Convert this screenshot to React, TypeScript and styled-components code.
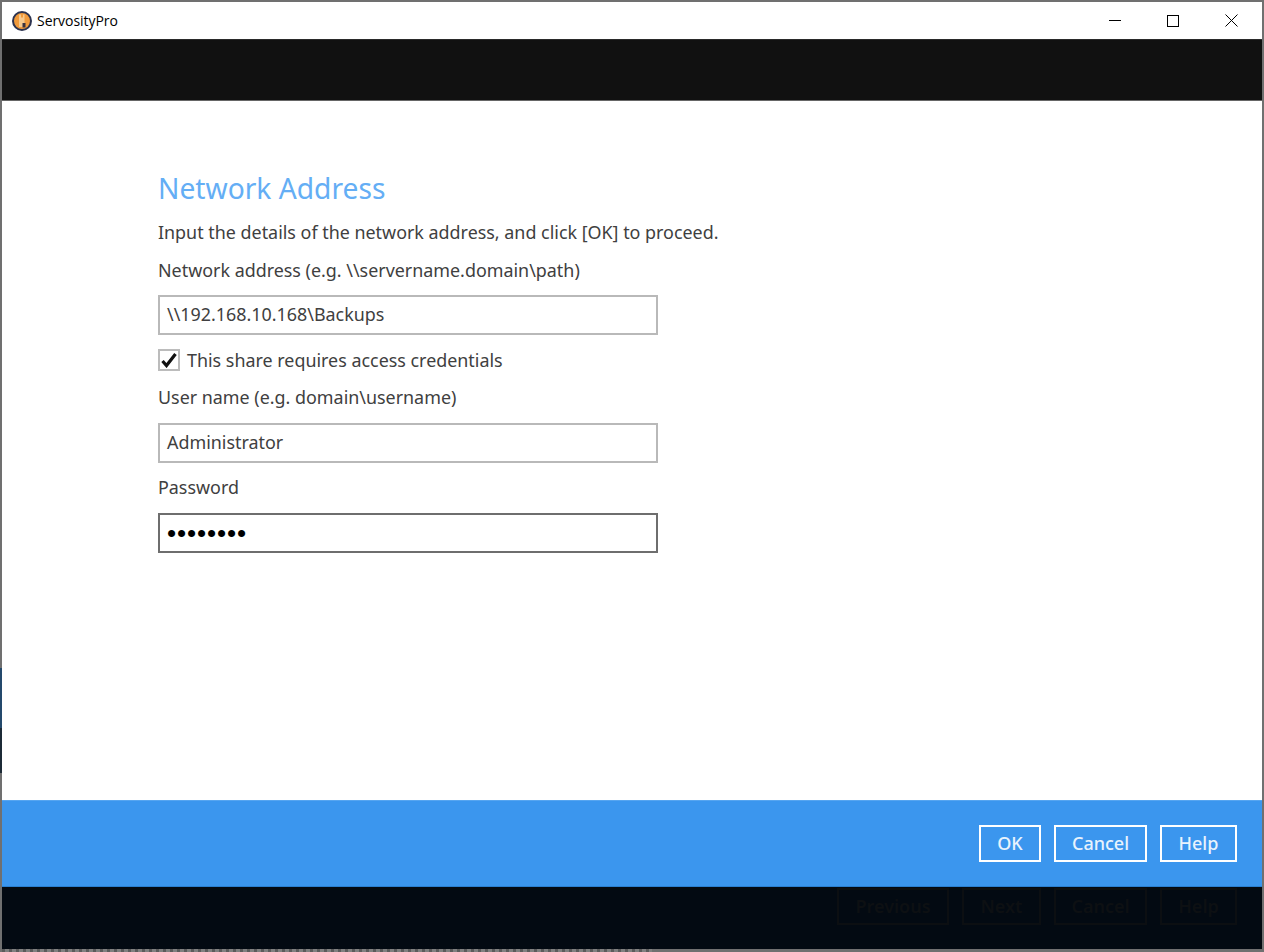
import React from "react";
import styled, { createGlobalStyle } from "styled-components";

const GlobalStyle = createGlobalStyle`
  html, body {
    margin: 0;
    padding: 0;
    height: 100%;
    overflow: hidden;
  }
  body {
    font-family: "Noto Sans", "Open Sans", "Liberation Sans", sans-serif;
  }
`;

const Desktop = styled.div`
  width: 1264px;
  height: 952px;
  box-sizing: border-box;
  padding: 2px 2px 0 2px;
  background-color: #707070;
  background-image: linear-gradient(
    to bottom,
    #707070 0,
    #707070 668px,
    #24496c 668px,
    #24496c 728px,
    #1c2a36 728px,
    #1c2a36 773px,
    #707070 773px
  );
  background-size: 2px 100%;
  background-repeat: no-repeat;
`;

const Window = styled.div`
  height: 947px;
  display: flex;
  flex-direction: column;
  background: #fff;
`;

const BleedStrip = styled.div`
  width: 650px;
  height: 3px;
  background: repeating-linear-gradient(to right, #5c5c5c 0, #5c5c5c 3px, #808080 3px, #808080 7px);
`;

const TitleBar = styled.div`
  height: 37px;
  flex: none;
  display: flex;
  align-items: center;
  padding-left: 10px;
  background: #fff;
`;

const AppName = styled.span`
  margin-left: 5px;
  font-family: "Open Sans", "Noto Sans", sans-serif;
  font-size: 14px;
  color: #000;
  letter-spacing: -0.05px;
`;

const WindowControls = styled.div`
  margin-left: auto;
  display: flex;
  height: 100%;
  padding-right: 1px;
`;

const ControlButton = styled.div`
  width: 58.5px;
  display: flex;
  align-items: center;
  justify-content: center;
`;

const HeaderBar = styled.div`
  height: 62px;
  flex: none;
  box-sizing: border-box;
  background: #111111;
  border-top: 1px solid #2a2a2a;
  border-bottom: 1px solid #666;
`;

const Content = styled.div`
  height: 699px;
  flex: none;
  box-sizing: border-box;
  padding: 68px 0 0 156px;
  background: #fff;
`;

const Heading = styled.h1`
  margin: 0 0 13px;
  font-size: 28.2px;
  line-height: 38px;
  font-weight: 400;
  color: #64aef5;
`;

const Text = styled.div<{ $gap?: number }>`
  font-size: 17.9px;
  line-height: 24px;
  color: #404040;
  margin-bottom: ${(props) => props.$gap ?? 0}px;
`;

const Field = styled.div<{ $focused?: boolean; $gap?: number }>`
  width: 500px;
  height: 40px;
  box-sizing: border-box;
  display: flex;
  align-items: center;
  padding: 0 0 2px 7px;
  border: 2px solid ${(props) => (props.$focused ? "#6e6e6e" : "#b9b9b9")};
  font-size: 17.9px;
  color: #404040;
  margin-bottom: ${(props) => props.$gap ?? 0}px;
`;

const PasswordDots = styled.span`
  color: #000;
  font-family: "Liberation Sans", sans-serif;
  font-size: 26px;
  line-height: 26px;
  letter-spacing: 0.9px;
  margin-top: 2px;
`;

const CheckRow = styled.div`
  display: flex;
  align-items: center;
  gap: 7px;
  height: 24px;
  margin: 13px 0 13px;
`;

const CheckBox = styled.div`
  width: 22px;
  height: 22px;
  box-sizing: border-box;
  border: 2px solid #bcbcbc;
  display: flex;
  align-items: center;
  justify-content: center;
`;

const ActionBar = styled.div`
  height: 87px;
  flex: none;
  box-sizing: border-box;
  display: flex;
  justify-content: flex-end;
  align-items: center;
  gap: 13px;
  padding-right: 25px;
  background: #3b96ee;
  border-top: 1px solid #56a5f0;
  border-bottom: 1px solid #2a7fd0;
`;

const ActionButton = styled.div<{ $width: number }>`
  width: ${(props) => props.$width}px;
  height: 37px;
  box-sizing: border-box;
  display: flex;
  align-items: center;
  justify-content: center;
  padding-bottom: 1px;
  border: 2px solid #fff;
  font-size: 18px;
  font-weight: 500;
  color: #e8f3fd;
`;

const BackdropBar = styled.div`
  flex: 1;
  display: flex;
  justify-content: flex-end;
  gap: 13px;
  padding: 1px 25px 0 0;
  background: #030a12;
`;

const GhostButton = styled.div<{ $width: number }>`
  width: ${(props) => props.$width}px;
  height: 37px;
  box-sizing: border-box;
  display: flex;
  align-items: center;
  justify-content: center;
  padding-bottom: 1px;
  border: 2px solid #0c0f12;
  font-size: 18px;
  font-weight: 600;
  color: #0d1013;
`;

const Logo = () => (
  <svg width="20" height="20" viewBox="0 0 20 20">
    <circle cx="10" cy="10" r="9" fill="#f09a3c" stroke="#2c3350" strokeWidth="2" />
    <path d="M7 3.5h2v3h2v-3h1.5v8.5h-1.2v4H7z" fill="#f6c98e" />
    <rect x="10.5" y="12" width="3" height="4.5" fill="#3a3340" />
  </svg>
);

const App: React.FC = () => {
  return (
    <Desktop>
      <GlobalStyle />
      <Window>
        <TitleBar>
          <Logo />
          <AppName>ServosityPro</AppName>
          <WindowControls>
            <ControlButton>
              <svg width="12" height="12" viewBox="0 0 12 12">
                <path d="M0 5.5h12" stroke="#000" strokeWidth="1" />
              </svg>
            </ControlButton>
            <ControlButton>
              <svg width="12" height="12" viewBox="0 0 12 12">
                <rect x="0.5" y="0.5" width="11" height="11" fill="none" stroke="#000" />
              </svg>
            </ControlButton>
            <ControlButton>
              <svg width="13" height="13" viewBox="0 0 13 13">
                <path d="M0.5 0.5l12 12M12.5 0.5l-12 12" stroke="#000" strokeWidth="1" />
              </svg>
            </ControlButton>
          </WindowControls>
        </TitleBar>
        <HeaderBar />
        <Content>
          <Heading>Network Address</Heading>
          <Text $gap={14}>Input the details of the network address, and click [OK] to proceed.</Text>
          <Text $gap={13}>Network address (e.g. \\servername.domain\path)</Text>
          <Field>\\192.168.10.168\Backups</Field>
          <CheckRow>
            <CheckBox>
              <svg width="16" height="16" viewBox="0 0 16 16">
                <path d="M1.5 9l4 4.6L14.5 2" fill="none" stroke="#111" strokeWidth="3.2" />
              </svg>
            </CheckBox>
            <Text>This share requires access credentials</Text>
          </CheckRow>
          <Text $gap={14}>User name (e.g. domain\username)</Text>
          <Field $gap={12}>Administrator</Field>
          <Text $gap={14}>Password</Text>
          <Field $focused>
            <PasswordDots>••••••••</PasswordDots>
          </Field>
        </Content>
        <ActionBar>
          <ActionButton $width={62}>OK</ActionButton>
          <ActionButton $width={93}>Cancel</ActionButton>
          <ActionButton $width={77}>Help</ActionButton>
        </ActionBar>
        <BackdropBar>
          <GhostButton $width={112}>Previous</GhostButton>
          <GhostButton $width={79}>Next</GhostButton>
          <GhostButton $width={93}>Cancel</GhostButton>
          <GhostButton $width={77}>Help</GhostButton>
        </BackdropBar>
      </Window>
      <BleedStrip />
    </Desktop>
  );
};

export default App;
